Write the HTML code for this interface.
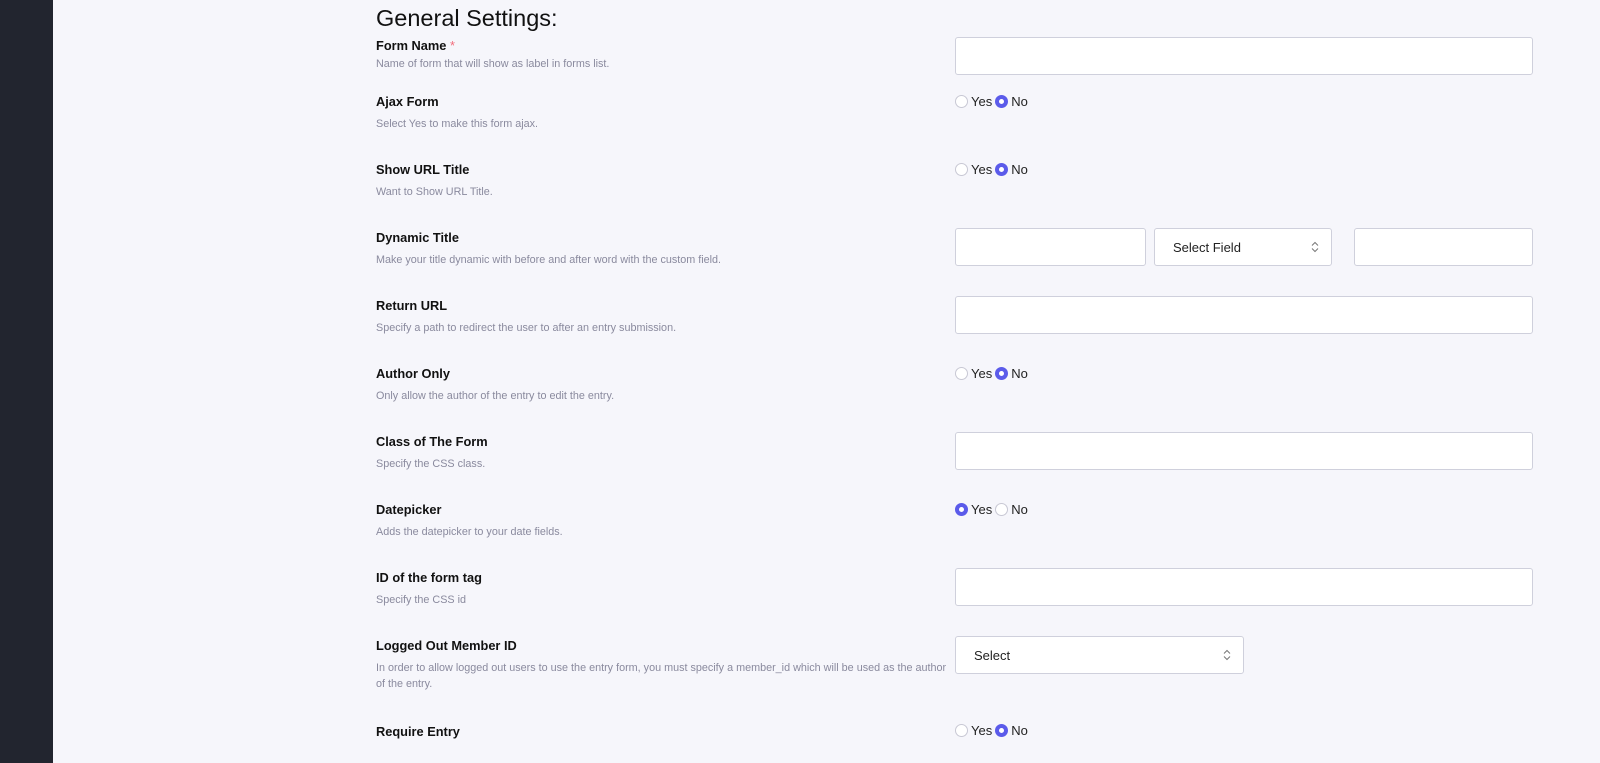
<!DOCTYPE html>
<html><head><meta charset="utf-8"><style>
*{box-sizing:border-box;margin:0;padding:0}
body{width:1600px;height:763px;overflow:hidden;background:#f6f6fb;font-family:"Liberation Sans",sans-serif;position:relative}
.side{position:absolute;left:0;top:0;width:53px;height:763px;background:#22252f}
h1{position:absolute;left:376px;top:5px;font-size:23.5px;font-weight:normal;color:#111;}
.lab{position:absolute;left:376px;font-size:12.8px;font-weight:bold;color:#111}
.lab .req{color:#f26b7a;font-weight:normal}
.desc{position:absolute;left:376px;font-size:10.8px;color:#8a8a9e;line-height:16px;width:575px}
.inp{position:absolute;height:38px;background:#fff;border:1px solid #cfd0dc;border-radius:3px}
.sel{font-size:13px;color:#222;padding:11px 0 0 18px}
.sel svg{position:absolute;right:12px;top:12px}
.radio{position:absolute;left:955px;font-size:13px;color:#222;display:flex;align-items:center}
.r{width:13px;height:13px;border-radius:50%;border:1px solid #c8c8d4;background:#fff;display:inline-block;margin-right:3px}
.r.on{border:4px solid #5b5bea;background:#fff}
.radio span.t{margin-right:3px}
</style></head><body>
<div class="side"></div>
<h1>General Settings:</h1>
<div class="lab" style="top:38px">Form Name <span class="req">*</span></div>
<div class="desc" style="top:56px">Name of form that will show as label in forms list.</div>
<div class="inp" style="left:955px;top:37px;width:578px"></div>

<div class="lab" style="top:94px">Ajax Form</div>
<div class="desc" style="top:116px">Select Yes to make this form ajax.</div>
<div class="radio" style="top:94px"><i class="r"></i><span class="t">Yes</span><i class="r on"></i><span>No</span></div>

<div class="lab" style="top:162px">Show URL Title</div>
<div class="desc" style="top:184px">Want to Show URL Title.</div>
<div class="radio" style="top:162px"><i class="r"></i><span class="t">Yes</span><i class="r on"></i><span>No</span></div>

<div class="lab" style="top:230px">Dynamic Title</div>
<div class="desc" style="top:252px">Make your title dynamic with before and after word with the custom field.</div>
<div class="inp" style="left:955px;top:228px;width:191px"></div>
<div class="inp sel" style="left:1154px;top:228px;width:178px">Select Field<svg width="8" height="12" viewBox="0 0 8 12"><path d="M1 4.5L4 1.5L7 4.5M1 7.5L4 10.5L7 7.5" fill="none" stroke="#777" stroke-width="1"/></svg></div>
<div class="inp" style="left:1354px;top:228px;width:179px"></div>

<div class="lab" style="top:298px">Return URL</div>
<div class="desc" style="top:320px">Specify a path to redirect the user to after an entry submission.</div>
<div class="inp" style="left:955px;top:296px;width:578px"></div>

<div class="lab" style="top:366px">Author Only</div>
<div class="desc" style="top:388px">Only allow the author of the entry to edit the entry.</div>
<div class="radio" style="top:366px"><i class="r"></i><span class="t">Yes</span><i class="r on"></i><span>No</span></div>

<div class="lab" style="top:434px">Class of The Form</div>
<div class="desc" style="top:456px">Specify the CSS class.</div>
<div class="inp" style="left:955px;top:432px;width:578px"></div>

<div class="lab" style="top:502px">Datepicker</div>
<div class="desc" style="top:524px">Adds the datepicker to your date fields.</div>
<div class="radio" style="top:502px"><i class="r on"></i><span class="t">Yes</span><i class="r"></i><span>No</span></div>

<div class="lab" style="top:570px">ID of the form tag</div>
<div class="desc" style="top:592px">Specify the CSS id</div>
<div class="inp" style="left:955px;top:568px;width:578px"></div>

<div class="lab" style="top:638px">Logged Out Member ID</div>
<div class="desc" style="top:660px">In order to allow logged out users to use the entry form, you must specify a member_id which will be used as the author of the entry.</div>
<div class="inp sel" style="left:955px;top:636px;width:289px">Select<svg width="8" height="12" viewBox="0 0 8 12"><path d="M1 4.5L4 1.5L7 4.5M1 7.5L4 10.5L7 7.5" fill="none" stroke="#777" stroke-width="1"/></svg></div>

<div class="lab" style="top:724px">Require Entry</div>
<div class="radio" style="top:723px"><i class="r"></i><span class="t">Yes</span><i class="r on"></i><span>No</span></div>
</body></html>
